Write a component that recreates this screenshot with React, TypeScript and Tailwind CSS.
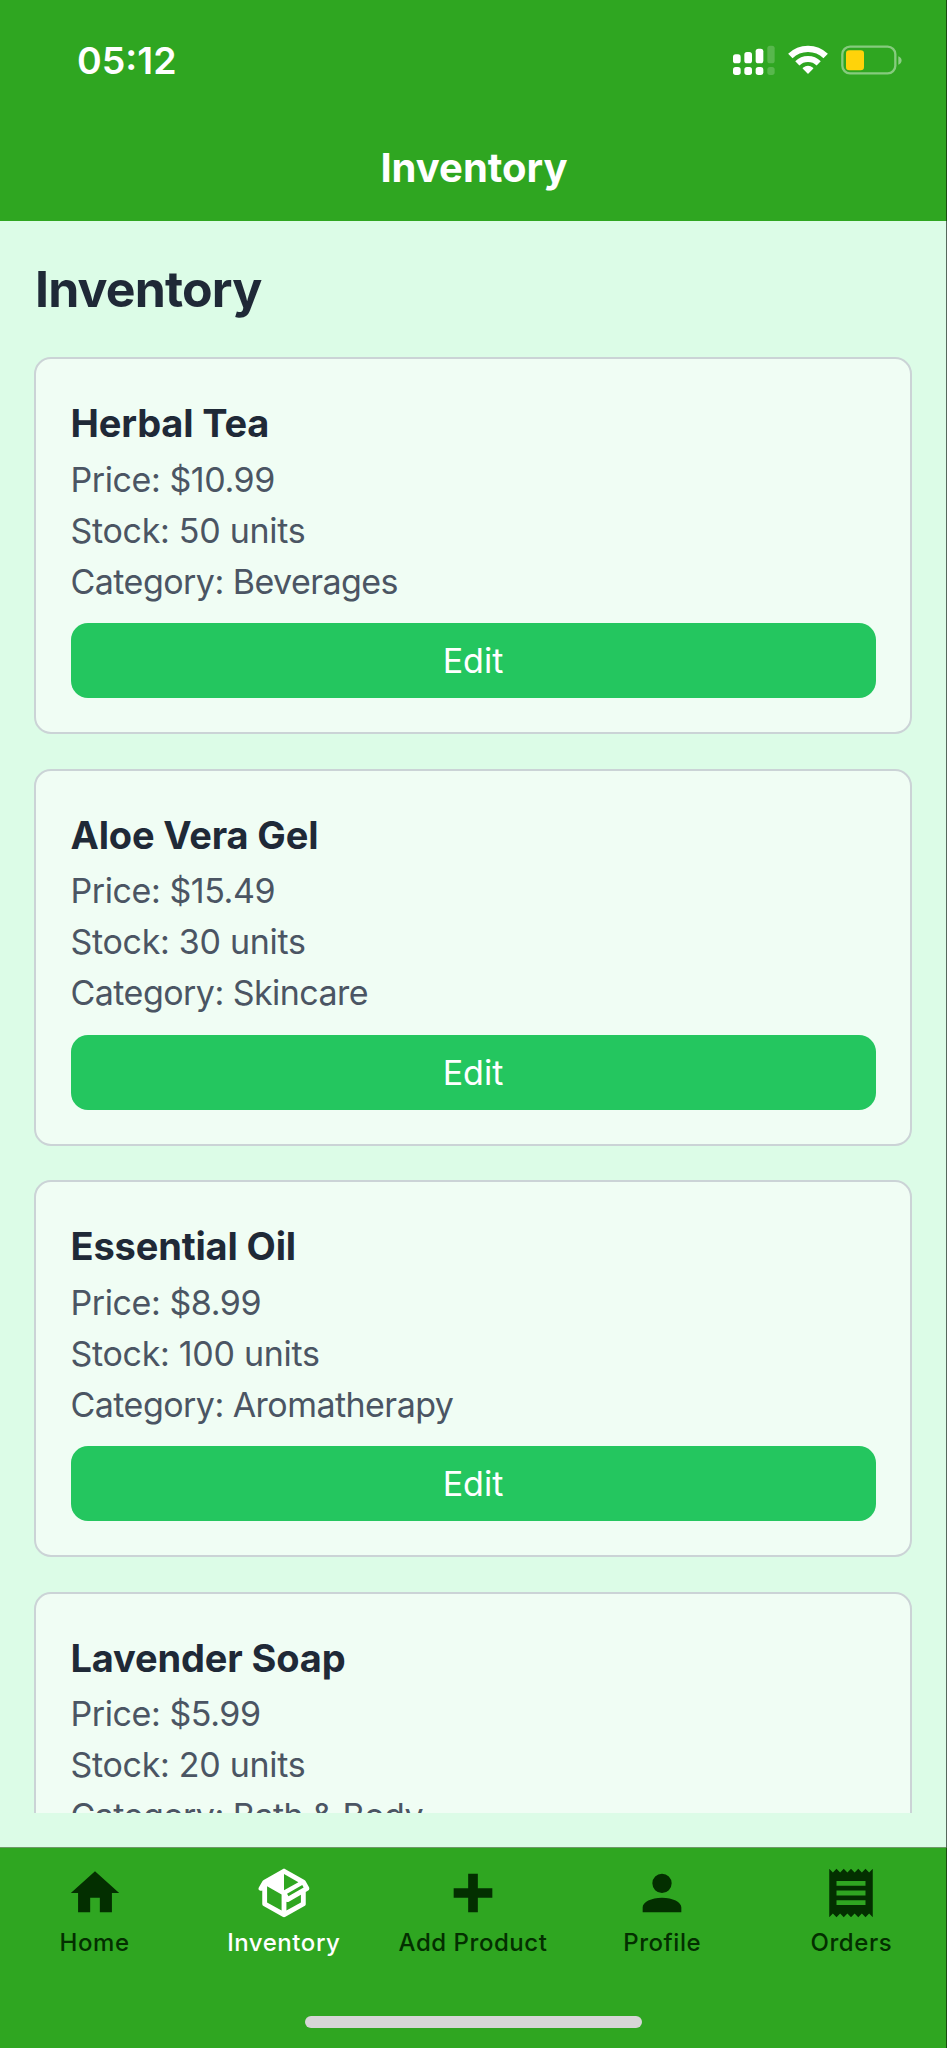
const products = [
  { name: "Herbal Tea", price: "$10.99", stock: 50, category: "Beverages" },
  { name: "Aloe Vera Gel", price: "$15.49", stock: 30, category: "Skincare" },
  { name: "Essential Oil", price: "$8.99", stock: 100, category: "Aromatherapy" },
  { name: "Lavender Soap", price: "$5.99", stock: 20, category: "Bath & Body" },
];

const tabs = [
  {
    label: "Home",
    icon: "M10 20v-6h4v6h5v-8h3L12 3 2 12h3v8z",
  },
  {
    label: "Inventory",
    active: true,
    icon: "M2 10.96a.985.985 0 0 1-.37-1.37L3.13 7c.11-.2.28-.34.47-.42l7.83-4.4c.16-.12.36-.18.57-.18s.41.06.57.18l7.9 4.44c.19.1.35.26.44.46l1.45 2.52c.28.48.11 1.09-.36 1.36l-1 .58v4.96c0 .38-.21.71-.53.88l-7.9 4.44c-.16.12-.36.18-.57.18s-.41-.06-.57-.18l-7.9-4.44A.991.991 0 0 1 3 16.5v-5.54c-.3.17-.68.18-1 0m10-6.81v6.7l5.96-3.35L12 4.15M5 15.91l6 3.38v-6.71L5 9.21v6.7m14 0v-3.22l-5 2.9c-.33.18-.7.17-1 .01v3.69l6-3.38m-5.15-2.55l6.28-3.63-.58-1.01-6.28 3.63.58 1.01z",
  },
  {
    label: "Add Product",
    icon: "M20 14h-6v6h-4v-6H4v-4h6V4h4v6h6z",
  },
  {
    label: "Profile",
    icon: "M12 4a4 4 0 0 1 4 4 4 4 0 0 1-4 4 4 4 0 0 1-4-4 4 4 0 0 1 4-4m0 10c4.42 0 8 1.79 8 4v2H4v-2c0-2.21 3.58-4 8-4",
  },
  {
    label: "Orders",
    icon: "M3 22l1.5-1.5L6 22l1.5-1.5L9 22l1.5-1.5L12 22l1.5-1.5L15 22l1.5-1.5L18 22l1.5-1.5L21 22V2l-1.5 1.5L18 2l-1.5 1.5L15 2l-1.5 1.5L12 2l-1.5 1.5L9 2 7.5 3.5 6 2 4.5 3.5 3 2zM18 9H6V7h12m0 6H6v-2h12m0 6H6v-2h12z",
  },
];

function SignalIcon() {
  return (
    <svg width="42" height="30" viewBox="0 0 126 90" fill="white">
      <rect x="0" y="28" width="23" height="27" rx="8" />
      <rect x="34" y="21" width="23" height="34" rx="8" />
      <rect x="68" y="11" width="23" height="44" rx="8" />
      <rect x="103" y="2" width="22" height="53" rx="8" opacity="0.2" />
      <rect x="0" y="66" width="23" height="24" rx="8" />
      <rect x="34" y="66" width="23" height="24" rx="8" />
      <rect x="68" y="66" width="23" height="24" rx="8" />
      <rect x="103" y="66" width="22" height="24" rx="8" opacity="0.2" />
    </svg>
  );
}

function WifiIcon() {
  return (
    <svg width="40" height="30" viewBox="0 0 120 90">
      <g fill="none" stroke="white">
        <path d="M7 33a76 76 0 0 1 106 0" strokeWidth="19" />
        <path d="M28 55a46 46 0 0 1 64 0" strokeWidth="18" />
      </g>
      <path
        d="M60 84L46 70a23 23 0 0 1 28 0z"
        fill="white"
        stroke="white"
        strokeWidth="4"
        strokeLinejoin="round"
      />
    </svg>
  );
}

function BatteryIcon() {
  return (
    <svg width="61" height="30" viewBox="0 0 183 90">
      <rect
        x="4"
        y="5"
        width="159"
        height="80"
        rx="23"
        fill="none"
        stroke="white"
        strokeOpacity="0.42"
        strokeWidth="7"
      />
      <rect x="15" y="16" width="54" height="60" rx="10" fill="#ffd30a" />
      <path d="M172 34c13 4 13 21 0 25z" fill="white" fillOpacity="0.45" />
    </svg>
  );
}

export default function App() {
  return (
    <div className="flex h-[2048px] w-[947px] flex-col overflow-hidden bg-[#dcfce7] font-['Inter',sans-serif]">
      <header className="h-[221px] shrink-0 border-r border-[#18500f] bg-[#2fa621] text-white">
        <div className="flex h-[120px] items-center justify-between pr-[44px] pl-[77px]">
          <span className="pt-0.5 text-[37.5px] font-semibold">05:12</span>
          <div className="flex items-center">
            <SignalIcon />
            <div className="ml-[13px]">
              <WifiIcon />
            </div>
            <div className="ml-[13px]">
              <BatteryIcon />
            </div>
          </div>
        </div>
        <h1 className="pt-[18px] pl-0.5 text-center text-[40px] leading-[60px] font-bold">
          Inventory
        </h1>
      </header>

      <main className="flex min-h-0 flex-1 flex-col border-r border-r-[#56695d] p-[34px]">
        <h2 className="mb-[34px] pl-px text-[50px] leading-[69px] font-bold tracking-[-0.85px] text-[#1f2937]">
          Inventory
        </h2>

        <div className="-mt-px flex min-h-0 flex-1 flex-col gap-[34.6px] overflow-hidden">
          {products.map((product) => (
            <div
              key={product.name}
              className="h-[377px] shrink-0 rounded-[17px] border-2 border-[#cbd3d6] bg-[#f0fdf4] px-[34.5px] pt-[35px] text-[34px] leading-[51px] text-[#4b5563]"
            >
              <h3 className="text-[38px] leading-[59.5px] font-bold tracking-[-0.15px] text-[#1f2937]">
                {product.name}
              </h3>
              <p className="tracking-[-0.42px]">Price: {product.price}</p>
              <p className="tracking-[-0.3px]">Stock: {product.stock} units</p>
              <p className="tracking-[-0.54px]">Category: {product.category}</p>
              <button className="mt-[16.5px] block h-[75px] w-full rounded-[17px] bg-[#24c65f] text-center text-white">
                Edit
              </button>
            </div>
          ))}
        </div>
      </main>

      <nav className="flex h-[201px] shrink-0 flex-col items-center border-t border-r border-t-[#6f9a68] border-r-[#18500f] bg-[#2fa621]">
        <div className="grid w-full grid-cols-5 pt-[16px]">
          {tabs.map((tab) => (
            <div
              key={tab.label}
              className={
                tab.active
                  ? "flex flex-col items-center text-white"
                  : "flex flex-col items-center text-[#032f00]"
              }
            >
              <svg width="58" height="58" viewBox="0 0 24 24" fill="currentColor">
                <path d={tab.icon} />
              </svg>
              <span className="mt-[6px] text-[24px] leading-[30px] font-medium tracking-[0.55px] whitespace-nowrap">
                {tab.label}
              </span>
            </div>
          ))}
        </div>
        <div className="mt-[58px] h-[12px] w-[337px] rounded-full bg-[#d6d6d6]" />
      </nav>
    </div>
  );
}
